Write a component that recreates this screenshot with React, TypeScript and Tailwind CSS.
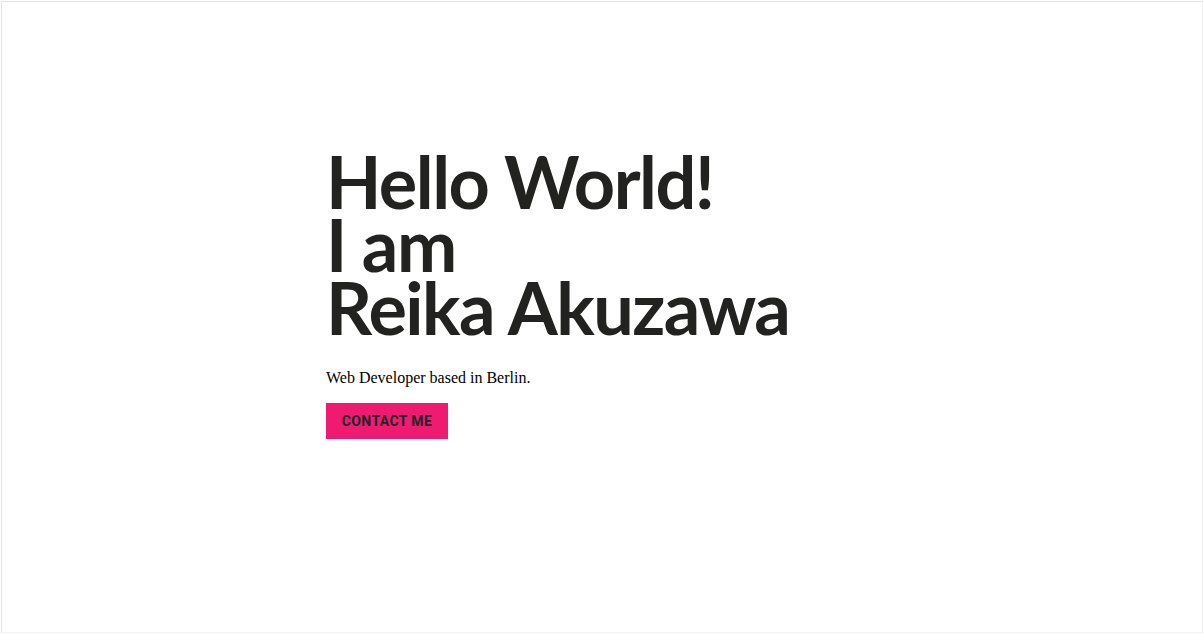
import React from 'react'

const App = () => {
  return (
    <div className="h-[634px] w-full bg-white p-px">
      <div className="flex h-full flex-col items-start border border-[#e4e4e4] border-r-[#f3f3f3] border-b-[#f3f3f3] pl-[324px] pt-[148px]">
        <h1 className="font-['Lato','Open_Sans',sans-serif] text-[72px] leading-[63px] font-bold tracking-[-1.5px] text-[#222220]">
          <span className="block">Hello World!</span>
          <span className="block">I am</span>
          <span className="block">Reika Akuzawa</span>
        </h1>
        <p className="mt-[29px] font-['Liberation_Serif',serif] text-[16px] leading-[20px] text-black">
          Web Developer based in Berlin.
        </p>
        <button className="mt-[15px] h-[36px] w-[122px] bg-[#ee1b70] font-['Roboto',sans-serif] text-[14px] font-bold tracking-[0.4px] text-[#22222a]">
          CONTACT ME
        </button>
      </div>
    </div>
  )
}

export default App
